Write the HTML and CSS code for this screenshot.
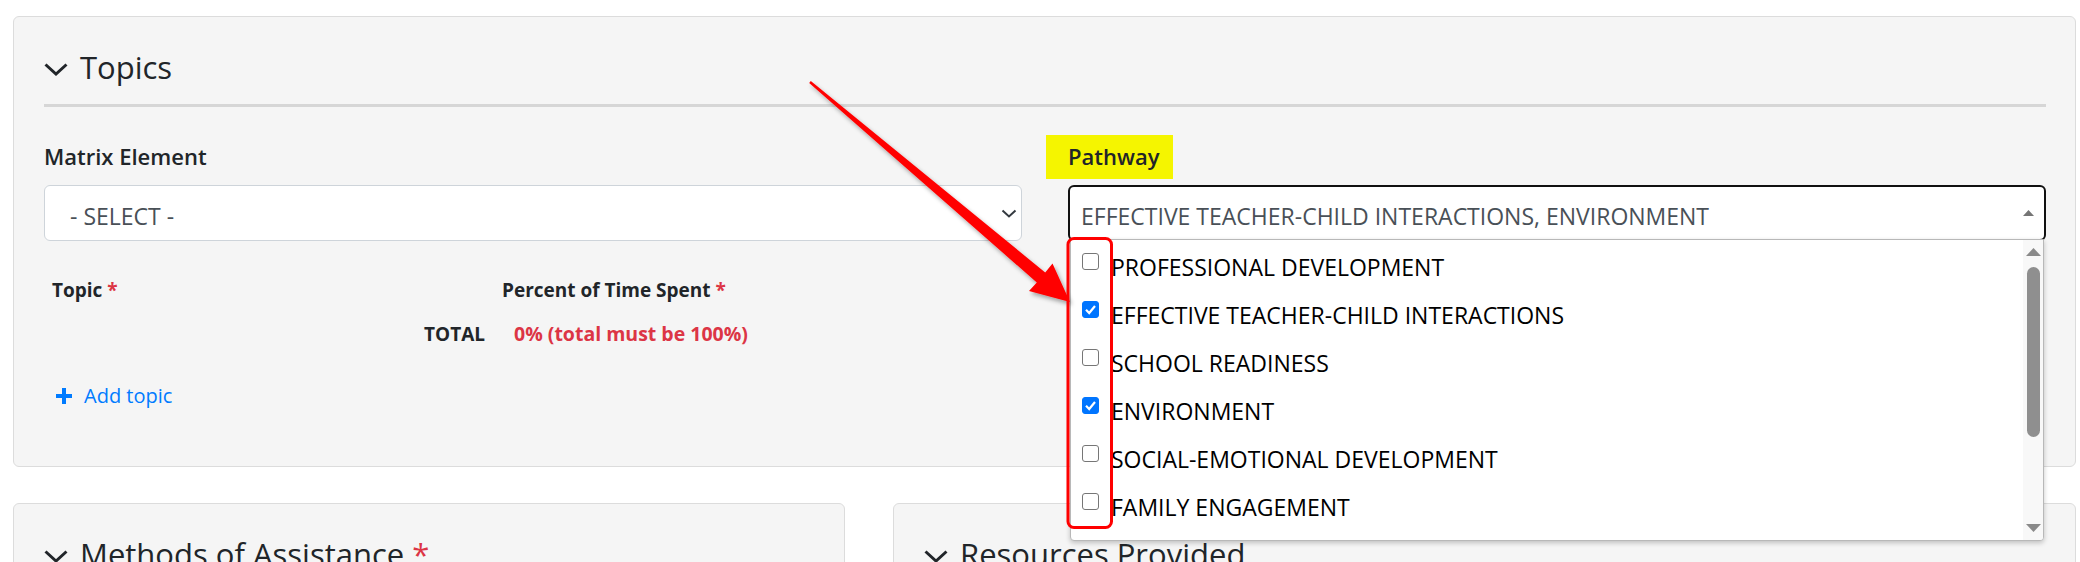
FILE: index.html
```html
<!DOCTYPE html>
<html lang="en">
<head>
<meta charset="utf-8">
<title>Topics</title>
<link rel="stylesheet" href="styles.css">
</head>
<body>
<div class="page">
  <section class="card card-topics">
    <h3 class="card-title">
      <svg class="chev" width="24" height="13" viewBox="0 0 24 13"><path d="M1.5 1.5 L12 11 L22.5 1.5" fill="none" stroke="#212529" stroke-width="3"/></svg>
      <span>Topics</span>
    </h3>
    <hr class="rule">
    <div class="fields">
      <div class="field">
        <div class="label-row"><span class="label">Matrix Element</span></div>
        <div class="select select-matrix">
          <span class="sel-text">- SELECT -</span>
          <svg width="16" height="9" viewBox="0 0 16 9"><path d="M1.5 1.5 L8 7.5 L14.5 1.5" fill="none" stroke="#343a40" stroke-width="2"/></svg>
        </div>
      </div>
      <div class="field">
        <div class="label-row"><span class="label hl">Pathway</span></div>
        <div class="select select-focus">
          <span class="sel-text">EFFECTIVE TEACHER-CHILD INTERACTIONS, ENVIRONMENT</span>
          <svg width="11" height="6" viewBox="0 0 11 6"><path d="M0 6 L5.5 0 L11 6 Z" fill="#757575"/></svg>
          <div class="dropdown">
            <div class="options">
              <div class="opt"><span class="cb"></span><span class="opt-text">PROFESSIONAL DEVELOPMENT</span></div>
              <div class="opt"><span class="cb on"><svg width="17" height="17" viewBox="0 0 17 17"><path d="M4 8.8 L7.2 12 L13 5" fill="none" stroke="#fff" stroke-width="2.2"/></svg></span><span class="opt-text">EFFECTIVE TEACHER-CHILD INTERACTIONS</span></div>
              <div class="opt"><span class="cb"></span><span class="opt-text">SCHOOL READINESS</span></div>
              <div class="opt"><span class="cb on"><svg width="17" height="17" viewBox="0 0 17 17"><path d="M4 8.8 L7.2 12 L13 5" fill="none" stroke="#fff" stroke-width="2.2"/></svg></span><span class="opt-text">ENVIRONMENT</span></div>
              <div class="opt"><span class="cb"></span><span class="opt-text">SOCIAL-EMOTIONAL DEVELOPMENT</span></div>
              <div class="opt"><span class="cb"></span><span class="opt-text">FAMILY ENGAGEMENT</span></div>
            </div>
            <div class="scrollbar">
              <svg class="sb-up" width="15" height="8" viewBox="0 0 15 8"><path d="M0 8 L7.5 0 L15 8 Z" fill="#8a8a8a"/></svg>
              <div class="sb-thumb"></div>
              <svg class="sb-down" width="15" height="8" viewBox="0 0 15 8"><path d="M0 0 L7.5 8 L15 0 Z" fill="#8a8a8a"/></svg>
            </div>
          </div>
        </div>
      </div>
    </div>
    <div class="topic-table">
      <div class="th th-topic">Topic <span class="req">*</span></div>
      <div class="th th-pct">Percent of Time Spent <span class="req">*</span></div>
      <div class="total-label">TOTAL</div>
      <div class="total-val">0% (total must be 100%)</div>
    </div>
    <a class="add-link" href="#">
      <svg width="18" height="18" viewBox="0 0 18 18"><path d="M9 1 V17 M1 9 H17" stroke="#007bff" stroke-width="4"/></svg>
      <span>Add topic</span>
    </a>
  </section>
  <div class="bottom-row">
    <section class="card card-sub">
      <h3 class="card-title">
        <svg class="chev" width="24" height="13" viewBox="0 0 24 13"><path d="M1.5 1.5 L12 11 L22.5 1.5" fill="none" stroke="#212529" stroke-width="3"/></svg>
        <span>Methods of Assistance <span class="req">*</span></span>
      </h3>
    </section>
    <section class="card card-sub">
      <h3 class="card-title">
        <svg class="chev" width="24" height="13" viewBox="0 0 24 13"><path d="M1.5 1.5 L12 11 L22.5 1.5" fill="none" stroke="#212529" stroke-width="3"/></svg>
        <span>Resources Provided</span>
      </h3>
    </section>
  </div>
  <svg class="annot" width="2080" height="562" viewBox="0 0 2080 562">
    <defs>
      <filter id="sh" x="-20%" y="-20%" width="140%" height="140%">
        <feDropShadow dx="2" dy="3" stdDeviation="2" flood-color="#000" flood-opacity="0.35"/>
      </filter>
    </defs>
    <polygon points="809.2,82.9 1036.8,282.5 1029,291 1070,302 1052.5,263.5 1045.2,272.5 810.8,81.1" fill="#ff0000" filter="url(#sh)"/>
    <rect x="1068" y="238.5" width="43.5" height="289" rx="6" fill="none" stroke="#ff0000" stroke-width="3"/>
  </svg>
</div>
</body>
</html>
```
FILE: styles.css
```css
html, body {
  margin: 0;
  padding: 0;
  overflow: hidden;
  background: #fff;
}
body {
  font-family: "Open Sans", "Noto Sans", sans-serif;
  color: #212529;
}
.page {
  position: relative;
  width: 2080px;
  height: 562px;
  padding: 16px 4px 0 13px;
  box-sizing: border-box;
}
.card {
  background: #f5f5f5;
  border: 1px solid #dcdcdc;
  border-radius: 6px;
  box-sizing: border-box;
  padding: 30px 29px 0 30px;
}
.card-topics {
  height: 451px;
}
.card-title {
  margin: 0;
  display: flex;
  align-items: center;
  gap: 12px;
  font-size: 31px;
  font-weight: 500;
  line-height: 40px;
  color: #212529;
}
.chev {
  margin-top: 4px;
  flex: none;
}
.req {
  color: #dc3545;
}
.rule {
  margin: 17px 0 28px;
  border: 0;
  height: 3px;
  background: #d6d6d6;
}
.fields {
  display: grid;
  grid-template-columns: 1fr 1fr;
  column-gap: 46px;
}
.label-row {
  height: 44px;
  margin-bottom: 6px;
}
.label {
  display: inline-block;
  font-size: 22px;
  font-weight: 600;
  line-height: 43px;
}
.hl {
  background: #f5f500;
  margin-left: -22px;
  padding: 0 14px 1px 22px;
}
.select {
  position: relative;
  height: 56px;
  box-sizing: border-box;
  border: 1px solid #ced4da;
  border-radius: 6px;
  background: #fff;
  display: flex;
  align-items: center;
  justify-content: space-between;
  font-size: 23px;
  color: #495057;
}
.sel-text {
  margin-top: 5px;
  white-space: nowrap;
}
.select-matrix {
  padding: 0 4px 0 25px;
}
.select-focus {
  border: 2px solid #111;
  padding: 0 10px 0 11px;
}
.dropdown {
  position: absolute;
  left: 0;
  right: 0;
  top: 52px;
  height: 302px;
  box-sizing: border-box;
  background: #fff;
  border: 1px solid #b8b8b8;
  border-radius: 0 0 4px 4px;
  box-shadow: 0 2px 5px rgba(0, 0, 0, 0.22);
  display: flex;
  overflow: hidden;
  z-index: 2;
}
.options {
  flex: 1;
}
.opt {
  height: 48px;
  display: flex;
  align-items: flex-start;
  padding-left: 11px;
}
.cb {
  width: 17px;
  height: 17px;
  box-sizing: border-box;
  border: 1.3px solid #767676;
  border-radius: 3px;
  background: #fff;
  margin-top: 13px;
  flex: none;
  display: flex;
}
.cb.on {
  background: #0075ff;
  border-color: #0075ff;
}
.cb svg {
  margin: -1.3px;
}
.opt-text {
  margin-left: 12px;
  font-size: 23px;
  line-height: 48px;
  padding-top: 3px;
  color: #000;
  white-space: nowrap;
}
.scrollbar {
  width: 20px;
  background: #f8f8f8;
  display: flex;
  flex-direction: column;
  align-items: center;
}
.sb-up {
  margin-top: 8px;
  margin-left: 1px;
}
.sb-thumb {
  width: 13px;
  height: 170px;
  margin-top: 11px;
  margin-left: 1px;
  border-radius: 7px;
  background: #8f8f8f;
}
.sb-down {
  margin-top: auto;
  margin-bottom: 8px;
  margin-left: 1px;
}
.topic-table {
  display: grid;
  grid-template-columns: 450px 1fr;
  margin-top: 35px;
  font-size: 19px;
  font-weight: 700;
  line-height: 28px;
}
.th {
  padding-left: 8px;
}
.total-label {
  margin-top: 16px;
  text-align: right;
  padding-right: 9px;
}
.total-val {
  margin-top: 16px;
  padding-left: 20px;
  font-size: 19.5px;
  color: #dc3545;
}
.add-link {
  display: inline-flex;
  align-items: center;
  gap: 11px;
  margin-top: 34px;
  margin-left: 11px;
  font-size: 20px;
  line-height: 28px;
  color: #007bff;
  text-decoration: none;
}
.bottom-row {
  display: grid;
  grid-template-columns: 832px 1183px;
  column-gap: 48px;
  margin-top: 36px;
}
.card-sub {
  height: 200px;
}
.annot {
  position: absolute;
  left: 0;
  top: 0;
  pointer-events: none;
  z-index: 5;
}
```
